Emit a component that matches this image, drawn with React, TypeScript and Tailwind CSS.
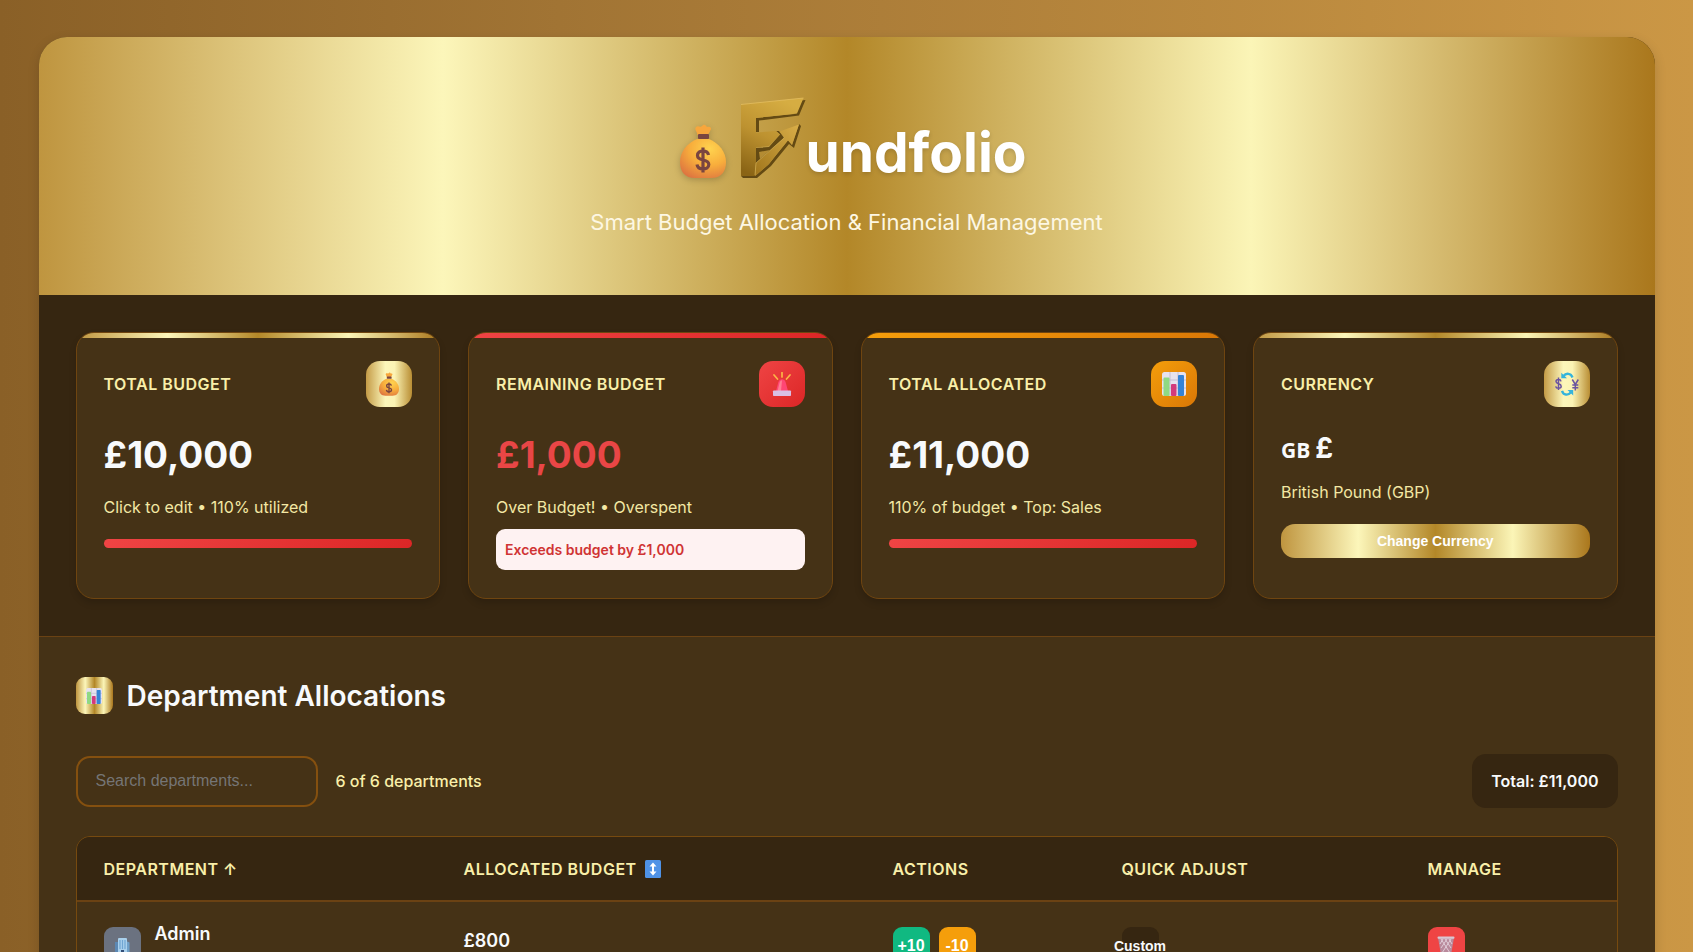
import type { ReactNode } from "react";

const GOLD = "bg-[linear-gradient(to_right,#BF953F,#FCF6BA,#B38728,#FBF5B7,#AA771C)]";
const GOLD_TILE = "bg-[linear-gradient(to_right,#C49B46,#FCF6BA_42%,#FBF3B4_62%,#B98E34)]";
const RED = "bg-[linear-gradient(135deg,#ef4444,#dc2626)]";
const ORANGE = "bg-[linear-gradient(135deg,#f59e0b,#d97706)]";

function MoneyBag({ id, className }: { id: string; className: string }) {
  return (
    <svg viewBox="0 0 46 54" className={className} aria-hidden="true">
      <defs>
        <radialGradient id={id} cx="0.65" cy="0.25" r="0.85">
          <stop offset="0" stopColor="#ffd34f" />
          <stop offset="0.5" stopColor="#f8ae3c" />
          <stop offset="1" stopColor="#dd7440" />
        </radialGradient>
      </defs>
      <path d="M17.500 11 C17 7 14 5.500 16 3 C18.500 1 20 4 22 2 C24 -0.500 26 1 27 3 C30 2 32 4 30.500 6 C29.500 9 28.500 9 28 11 Z" fill="#f7a63c" />
      <path d="M17 15 L29 15 C39 19 46 28 46 38 C46 48 41 54 31 54 L15 54 C5 54 0 48 0 38 C0 28 7 19 17 15 Z" fill={`url(#${id})`} />
      <rect x="18" y="10" width="11" height="5" rx="1" fill="#7a4540" />
      <path d="M28.500 31 C28 28 25.500 27 23 27 C20 27 17.500 28.500 17.500 31.500 C17.500 38 28.800 34 28.800 40.500 C28.800 43.500 26 45 23 45 C20 45 17.500 43.500 17 40.500 M23 23.500 V48.500" fill="none" stroke="#7a4540" strokeWidth="3.200" />
    </svg>
  );
}

function LetterMark() {
  return (
    <svg viewBox="0 0 64 80" className="h-20 w-16 overflow-visible" role="img" aria-label="F">
      <defs>
        <linearGradient id="mark" x1="0.6" y1="0" x2="0.2" y2="1">
          <stop offset="0" stopColor="#d6ad42" />
          <stop offset="0.5" stopColor="#bd9230" />
          <stop offset="1" stopColor="#8a6415" />
        </linearGradient>
        <linearGradient id="arrow" x1="1" y1="0" x2="0" y2="1">
          <stop offset="0" stopColor="#d9ae48" />
          <stop offset="1" stopColor="#a0751b" />
        </linearGradient>
      </defs>
      <g fill="#644a13">
        <path d="M2 8 L64.500 2 L58 17.500 L18 22.500 L18 34 L15 34 L15 20 L56 15.700 Z" />
        <path d="M0 78 L14 78 L28 66 L47 42 L51 47 L58 26 L60 28 L53 50 L48 46 L30 68 L16 80 L2 80 Z" />
        <path d="M35 33 L39 36.500 L28 49 L15 50 L15 66 L43 40 L41 37 L38 33 Z" />
      </g>
      <path d="M18 54 L29 52 L19 61 Z" fill="#b48c33" />
      <path d="M0 6.500 L62.500 0 L56 15.500 L15 20 L15 34.500 L35 33 L39 36.500 L28 48 L15 49.500 L15 66 L14 78 L0 78 Z" fill="url(#mark)" />
      <path d="M14 78 L15 65 L43.500 39.500 L38.500 33.500 L58 26.500 L51 47 L47 42.500 L27 67 Z" fill="url(#arrow)" />
      <path d="M0 6.500 L62.500 0" stroke="#e6c264" strokeWidth="0.700" />
      <path d="M14 77 L15 65 L43.500 39.500" stroke="#dcb95c" strokeWidth="0.600" fill="none" />
    </svg>
  );
}

function BarChart({ className }: { className: string }) {
  return (
    <svg viewBox="0 0 24 24" className={className} aria-hidden="true">
      <rect width="24" height="24" rx="2.500" fill="#e6e2ee" />
      <path d="M0 8 H24 M0 16 H24 M8 0 V24 M16 0 V24" stroke="#bcb6cb" strokeWidth="0.800" />
      <rect x="1.500" y="5.500" width="6" height="18.500" rx="1" fill="#8fd982" />
      <rect x="9" y="12" width="5.500" height="12" rx="1" fill="#d33a7c" />
      <rect x="16" y="3" width="6" height="21" rx="1" fill="#3583d6" />
    </svg>
  );
}

function Siren({ className }: { className: string }) {
  return (
    <svg viewBox="0 0 24 24" className={className} aria-hidden="true">
      <path d="M12 0.500 V5 M4 3 L7.500 7 M20 3 L16.500 7" stroke="#fbb546" strokeWidth="1.700" strokeLinecap="round" />
      <path d="M6 19 L8.300 10.500 C9 8 10.400 7.300 12 7.300 C13.600 7.300 15 8 15.700 10.500 L18 19 Z" fill="#ff4674" />
      <path d="M9.500 11 C10 9 11 8.500 12 8.500 L11 19 H7.500 Z" fill="#ff7d92" />
      <rect x="3" y="18.500" width="18" height="5.500" rx="0.800" fill="#d9bfe4" />
    </svg>
  );
}

function Exchange({ className }: { className: string }) {
  return (
    <svg viewBox="0 0 24 24" className={className} aria-hidden="true">
      <g fill="none" stroke="#35b4dc" strokeWidth="2.400">
        <path d="M8.500 4 C11 0.800 16 1 17.500 5.500" />
        <path d="M16 20.300 C13 23.800 8.500 23.300 7 18.800" />
      </g>
      <path d="M6.300 0.800 V6.200 H12 Z M18.200 23.500 V18 H12.500 Z" fill="#35b4dc" />
      <g fill="none" stroke="#6b53a0" strokeWidth="1.500">
        <path d="M6 9.300 C5.600 7 1 7 1 9.400 C1 12.300 6.200 11.200 6.200 14.200 C6.200 16.800 1 16.800 0.700 14.300 M3.500 5.500 V18" />
        <path d="M17.300 7.500 L20.300 12.500 L23.300 7.500 M20.300 12.500 V18.500 M17.300 13 H23.300 M17.300 15.700 H23.300" />
      </g>
    </svg>
  );
}

function Office({ className }: { className: string }) {
  return (
    <svg viewBox="0 0 16 18" className={className} aria-hidden="true">
      <path d="M1 5 H5 V18 H1 Z" fill="#5c88b3" />
      <path d="M12 4 L15.500 5.500 V18 H12 Z" fill="#6fa0c8" />
      <rect x="4" y="1" width="9" height="17" rx="1" fill="#a9d0ec" />
      <path d="M6 3 V12 M8.500 3 V12 M11 3 V12" stroke="#6fa5d2" strokeWidth="1.200" />
      <rect x="7" y="13" width="3" height="5" fill="#33507a" />
    </svg>
  );
}

function Basket({ className }: { className: string }) {
  return (
    <svg viewBox="0 0 18 20" className={className} aria-hidden="true">
      <path d="M1 1.500 H17 L14 19 H4 Z" fill="#b98a9c" />
      <path d="M4 3 L13 17 M8 3 L14 12 M12 3 L15 8 M14 3 L5 17 M10 3 L4 12 M6 3 L3 8" stroke="#e4d3de" strokeWidth="0.900" />
      <rect x="0.500" y="0.500" width="17" height="2.200" rx="1" fill="#d9c7d3" />
      <rect x="4" y="17.500" width="10" height="2" rx="1" fill="#c9b4c3" />
    </svg>
  );
}

function SortGlyph() {
  return (
    <svg viewBox="0 0 16 18" className="h-[18px] w-4" aria-hidden="true">
      <rect width="16" height="18" rx="1.500" fill="#4f92e6" />
      <path d="M8 2.500 L11.500 6.500 H9 V11.500 H11.500 L8 15.500 L4.500 11.500 H7 V6.500 H4.500 Z" fill="#fff" />
    </svg>
  );
}

function Card({ label, bar, tile, icon, children }: { label: string; bar: string; tile: string; icon: ReactNode; children: ReactNode }) {
  return (
    <article className="relative overflow-hidden rounded-[18px] border border-[#6f4510] bg-[#453216] px-[27px] py-7 shadow-[0_4px_7px_rgba(0,0,0,0.15)]">
      <div className={`absolute inset-x-0 top-0 h-[5px] ${bar}`} />
      <div className="flex items-center justify-between">
        <h2 className="text-base font-semibold uppercase tracking-[0.5px] text-[#f9efa9]">{label}</h2>
        <div className={`flex size-[46px] items-center justify-center rounded-[14px] ${tile}`}>{icon}</div>
      </div>
      {children}
    </article>
  );
}

const AMOUNT = "mt-[25px] text-[37px] leading-[46px] font-bold";
const NOTE = "text-base leading-6 text-[#f3e8a4]";

function Meter() {
  return <div className={`mt-5 h-[9px] rounded-full ${RED}`} role="progressbar" aria-valuenow={100} aria-label="Budget used" />;
}

const TH = "h-16 px-[27px] text-left text-base font-semibold uppercase tracking-[0.5px] text-[#f9efa9]";
const TD = "px-[27px] pb-6 align-top";
const SQUARE = "flex size-[37px] items-center justify-center rounded-[9px] font-['Liberation_Sans',Arial,sans-serif] font-bold";

export default function App() {
  return (
    <div className="min-h-screen bg-[linear-gradient(to_right,#8A6027,#A17434_33%,#CB9745)] px-[37px] py-[37px] font-['Inter',sans-serif]">
      <main className="mx-auto max-w-[1616px] overflow-hidden rounded-[28px] bg-[#453216] shadow-[0_4px_12px_rgba(0,0,0,0.15)]">
        <header className={`flex flex-col items-center pt-[61px] pb-[57px] ${GOLD}`}>
          <h1 className="flex items-end text-[55px] leading-[52px] font-bold text-white">
            <MoneyBag id="bag-large" className="mr-[15px] ml-[14px] h-[54px] w-[46px] drop-shadow-[0_2px_3px_rgba(0,0,0,0.2)]" />
            <LetterMark />
            <span className="[text-shadow:0_2px_4px_rgba(0,0,0,0.15)]">undfolio</span>
          </h1>
          <p className="mt-7 text-[22px] leading-8 text-[#fdf7e3]">Smart Budget Allocation &amp; Financial Management</p>
        </header>

        <section className="grid grid-cols-4 gap-7 border-b border-[#6b4213] bg-[#362611] p-[37px]">
          <Card label="Total Budget" bar={GOLD} tile={GOLD_TILE} icon={<MoneyBag id="bag-small" className="h-6 w-5" />}>
            <p className={`${AMOUNT} text-[#f8fafc]`}>£10,000</p>
            <p className={`mt-[17px] ${NOTE}`}>Click to edit • 110% utilized</p>
            <Meter />
          </Card>
          <Card label="Remaining Budget" bar={RED} tile={RED} icon={<Siren className="size-6" />}>
            <p className={`${AMOUNT} text-[#e94646]`}>£1,000</p>
            <p className={`mt-[17px] ${NOTE}`}>Over Budget! • Overspent</p>
            <p className="mt-[10px] rounded-[9px] bg-[#fef2f2] px-[9px] py-[10px] text-sm leading-[21px] font-semibold text-[#d03434]">Exceeds budget by £1,000</p>
          </Card>
          <Card label="Total Allocated" bar={ORANGE} tile={ORANGE} icon={<BarChart className="size-6" />}>
            <p className={`${AMOUNT} text-[#f8fafc]`}>£11,000</p>
            <p className={`mt-[17px] ${NOTE}`}>110% of budget • Top: Sales</p>
            <Meter />
          </Card>
          <Card label="Currency" bar={GOLD} tile={GOLD_TILE} icon={<Exchange className="size-6" />}>
            <p className="mt-6 flex items-baseline gap-[5px] text-[28px] leading-[34px] font-bold text-[#f8fafc]">
              <span className="font-['Open_Sans',sans-serif] text-[21px]">GB</span>£
            </p>
            <p className={`mt-[13px] ${NOTE}`}>British Pound (GBP)</p>
            <button type="button" className={`mt-5 h-[34px] w-full rounded-[14px] font-['Liberation_Sans',Arial,sans-serif] text-sm font-bold text-white ${GOLD}`}>
              Change Currency
            </button>
          </Card>
        </section>

        <section className="px-[37px] pt-10 pb-[37px]">
          <div className="flex items-center gap-[14px]">
            <div className={`flex size-[37px] items-center justify-center rounded-[9px] ${GOLD}`}>
              <BarChart className="size-4" />
            </div>
            <h2 className="text-[28px] leading-9 font-semibold text-[#f8fafc]">Department Allocations</h2>
          </div>

          <div className="mt-10 flex items-center justify-between">
            <div className="flex items-center gap-[18px]">
              <input
                type="text"
                aria-label="Search departments"
                placeholder="Search departments..."
                className="h-[51px] w-[242px] rounded-[14px] border-2 border-[#85500f] bg-transparent px-[18px] font-['Liberation_Sans',Arial,sans-serif] text-base text-[#f8fafc] placeholder:text-[#757575]"
              />
              <span className="text-base font-medium text-[#f9efa9]">6 of 6 departments</span>
            </div>
            <div className="rounded-[14px] bg-[#362611] px-[19px] py-[15px] text-base font-semibold text-[#f8fafc]">Total: £11,000</div>
          </div>

          <div className="mt-7 overflow-hidden rounded-[14px] border border-[#774a0f]">
            <table className="w-full table-fixed border-collapse">
              <colgroup>
                <col className="w-[360px]" />
                <col className="w-[429px]" />
                <col className="w-[229px]" />
                <col className="w-[306px]" />
                <col className="w-[216px]" />
              </colgroup>
              <thead className="border-b-2 border-[#6b4213] bg-[#362611]">
                <tr>
                  <th className={TH}>Department ↑</th>
                  <th className={TH}>
                    <span className="flex items-center gap-2">Allocated Budget <SortGlyph /></span>
                  </th>
                  <th className={TH}>Actions</th>
                  <th className={TH}>Quick Adjust</th>
                  <th className={TH}>Manage</th>
                </tr>
              </thead>
              <tbody>
                <tr>
                  <td className={`${TD} pt-5`}>
                    <div className="flex gap-[14px]">
                      <div className="mt-[5px] flex size-[37px] items-center justify-center rounded-[9px] bg-[#6b7280]">
                        <Office className="h-[18px] w-4" />
                      </div>
                      <span className="text-lg leading-6 font-semibold text-[#f8fafc]">Admin</span>
                    </div>
                  </td>
                  <td className={`${TD} pt-[27px] text-lg leading-6 font-semibold text-[#f8fafc]`}>£800</td>
                  <td className={`${TD} pt-[25px]`}>
                    <div className="flex gap-[9px]">
                      <button type="button" className={`${SQUARE} bg-[#10b981] text-base text-white`}>+10</button>
                      <button type="button" className={`${SQUARE} bg-[#f59e0b] text-base text-white`}>-10</button>
                    </div>
                  </td>
                  <td className={`${TD} pt-[25px]`}>
                    <button type="button" className={`${SQUARE} bg-[#362611] text-sm text-[#f8fafc]`}>Custom</button>
                  </td>
                  <td className={`${TD} pt-[25px]`}>
                    <button type="button" aria-label="Delete Admin" className={`${SQUARE} bg-[#ef4444]`}>
                      <Basket className="h-5 w-[18px]" />
                    </button>
                  </td>
                </tr>
              </tbody>
            </table>
          </div>
        </section>
      </main>
    </div>
  );
}
